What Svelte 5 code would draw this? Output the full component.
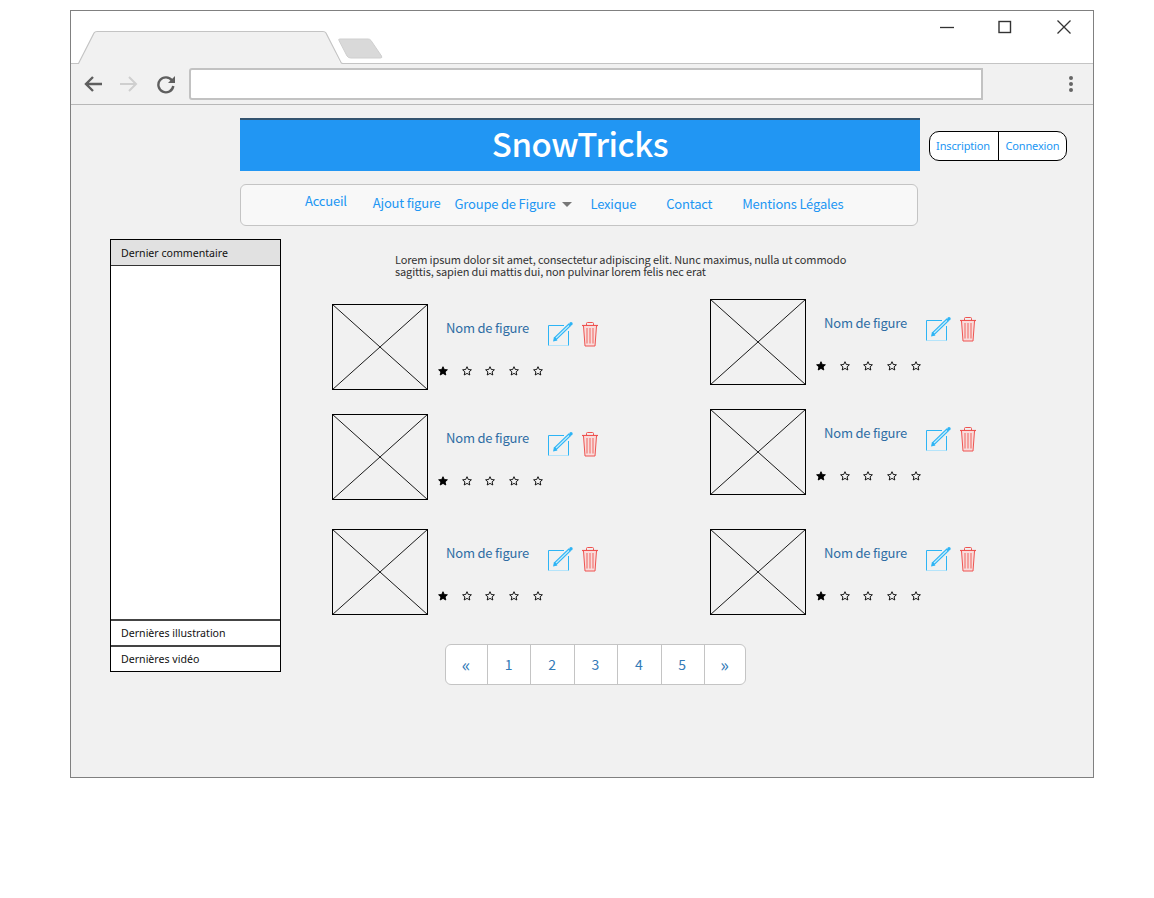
<script lang="ts">
  const navItems = [
    { label: 'Accueil', cls: 'accueil' },
    { label: 'Ajout figure', cls: 'ajout' },
    { label: 'Groupe de Figure', cls: 'groupe', caret: true },
    { label: 'Lexique', cls: 'lexique' },
    { label: 'Contact', cls: 'contact' },
    { label: 'Mentions Légales', cls: 'mentions' }
  ];
  const pages = ['«', '1', '2', '3', '4', '5', '»'];
  const columns = ['left', 'right'];
  const stars = [true, false, false, false, false];
</script>

<div class="window">
  <div class="tabbar">
    <svg class="tab" width="320" height="53" viewBox="0 0 320 53" aria-hidden="true">
      <path d="M0 52.500H8L23 21.500Q24 20.500 26 20.500H252Q254 20.500 255 22L269 52H320V53H0Z" fill="#f1f1f1" />
      <path d="M0 52.500H7.500L23 22Q24 20.500 26 20.500H252Q254 20.500 255 22L270 51.500Q270.500 52.500 272 52.500H320" fill="none" stroke="#c4c4c4" stroke-width="1.200" />
      <path d="M268 29.500Q267 28 269 28H297Q299 28 300 29.500L310.500 45Q311.500 47 309.500 47H280Q277 47 276 45Z" fill="#d9d9d9" stroke="#cfcfcf" />
    </svg>
    <div class="tabfill">
      <svg class="winbtn" width="14" height="14" viewBox="0 0 14 14" aria-hidden="true"><path d="M0 7.500H14" stroke="#333" stroke-width="1.300" /></svg>
      <svg class="winbtn" width="14" height="14" viewBox="0 0 14 14" aria-hidden="true"><rect x="1" y="1.500" width="11.500" height="11" fill="none" stroke="#333" stroke-width="1.400" /></svg>
      <svg class="winbtn close" width="16" height="16" viewBox="0 0 16 16" aria-hidden="true"><path d="M1.500 1.500L14.500 14.500M14.500 1.500L1.500 14.500" stroke="#333" stroke-width="1.300" /></svg>
    </div>
  </div>

  <div class="toolbar">
    <svg class="back" width="20" height="18" viewBox="0 0 20 18" aria-hidden="true"><path d="M19 9H3M10 2L3 9L10 16" fill="none" stroke="#5f5f5f" stroke-width="2.400" /></svg>
    <svg class="fwd" width="20" height="18" viewBox="0 0 20 18" aria-hidden="true"><path d="M1 9H17M10 2L17 9L10 16" fill="none" stroke="#cfcfcf" stroke-width="2" /></svg>
    <svg class="reload" width="20" height="20" viewBox="0 0 20 20" aria-hidden="true">
      <path d="M16 6.500A7.500 7.500 0 1 0 17.300 12" fill="none" stroke="#5f5f5f" stroke-width="2.400" />
      <path d="M19 2V9H12Z" fill="#5f5f5f" />
    </svg>
    <div class="address"></div>
    <div class="dots"><i></i><i></i><i></i></div>
  </div>

  <div class="content">
    <div class="topline">
      <h1>SnowTricks</h1>
      <div class="auth">
        <a href="#top">Inscription</a>
        <a href="#top">Connexion</a>
      </div>
    </div>

    <nav>
      {#each navItems as item}
        <a class={item.cls} href="#top">{item.label}{#if item.caret}<span class="caret"></span>{/if}</a>
      {/each}
    </nav>

    <div class="body">
      <aside>
        <div class="side-head">Dernier commentaire</div>
        <div class="side-main"></div>
        <div class="side-row">Dernières illustration</div>
        <div class="side-row">Dernières vidéo</div>
      </aside>

      <main>
        <p class="intro">Lorem ipsum dolor sit amet, consectetur adipiscing elit. Nunc maximus, nulla ut commodo sagittis, sapien dui mattis dui, non pulvinar lorem felis nec erat</p>

        <div class="cards">
          {#each columns as col}
            <div class="col {col}">
              {#each [0, 1, 2] as _}
                <div class="card">
                  <svg class="thumb" width="96" height="86" viewBox="0 0 96 86" aria-hidden="true">
                    <rect x=".5" y=".5" width="95" height="85" fill="none" stroke="#000" />
                    <path d="M0 0L96 86M96 0L0 86" stroke="#000" stroke-width=".9" />
                  </svg>
                  <div class="info">
                    <div class="title-row">
                      <span class="name">Nom de figure</span>
                      <svg class="edit" width="25" height="25" viewBox="0 0 25 25" aria-hidden="true">
                        <path d="M16 3.500H.500V23.500H20.500V9" fill="none" stroke="#2db4f5" />
                        <path d="M.500 23.500H20.500" stroke="#b5e4fa" />
                        <path d="M7 17L22 2.500" stroke="#2db4f5" stroke-width="3.600" />
                        <path d="M8 16L21 3.500" stroke="#c4ecfc" stroke-width="1.200" />
                        <path d="M5 19.500L6 15L9.500 18.500Z" fill="#2db4f5" />
                        <circle cx="23" cy="1.800" r="1.700" fill="#2db4f5" />
                      </svg>
                      <svg class="trash" width="18" height="25" viewBox="0 0 18 25" aria-hidden="true">
                        <path d="M0 3.500H16" stroke="#ef5350" stroke-width="1.200" />
                        <path d="M4.500 3V1.500Q4.500 .5 5.500 .5H10.500Q11.500 .5 11.500 1.500V3" fill="none" stroke="#ef5350" />
                        <path d="M1.500 4L3 24H13L14.500 4" fill="#f9dcdb" stroke="#ef5350" />
                        <path d="M5 6V21.500M8 6V21.500M11 6V21.500" stroke="#f28b88" stroke-width="1.500" />
                      </svg>
                    </div>
                    <div class="stars">
                      {#each stars as on}
                        <svg width="10" height="10" viewBox="0 0 10 10" aria-hidden="true">
                          <path d="M5 .7L6.300 3.500L9.400 3.800L7.100 5.900L7.800 9L5 7.400L2.200 9L2.900 5.900L.6 3.800L3.700 3.500Z" fill={on ? '#000' : 'none'} stroke="#000" stroke-width=".9" />
                        </svg>
                      {/each}
                    </div>
                  </div>
                </div>
              {/each}
            </div>
          {/each}
        </div>

        <div class="pager">
          {#each pages as p, i}
            <a class:arrow={i === 0 || i === pages.length - 1} href="#top">{p}</a>
          {/each}
        </div>
      </main>
    </div>
  </div>
</div>

<style>
  :global(body) { background: #fff; }
  .window { box-sizing: border-box; width: 1024px; height: 768px; margin: 10px 0 0 70px;
    border: 1px solid #808080; background: #fff;
    display: flex; flex-direction: column; font-family: "Noto Sans CJK SC", "Noto Sans", sans-serif; }

  .tabbar { display: flex; height: 53px; flex: none; }
  .tab { flex: none; display: block; }
  .tabfill { flex: 1; height: 53px; box-sizing: border-box; border-bottom: 1px solid #c4c4c4; display: flex; justify-content: flex-end;
    align-items: flex-start; gap: 44px; padding: 9px 21px 0 0; }
  .winbtn { flex: none; }
  .close { margin-top: -1px; }

  .toolbar { height: 41px; flex: none; box-sizing: border-box; background: #f1f1f1; border-bottom: 1px solid #b8b8b8;
    display: flex; align-items: center; padding: 0 20px 0 12px; }
  .fwd { margin-left: 16px; }
  .reload { margin-left: 17px; }
  .address { width: 794px; height: 32px; box-sizing: border-box; margin-left: 13px; background: #fff;
    border: 2px solid #c2c2c2; border-radius: 3px 0 0 3px; }
  .dots { margin-left: auto; display: flex; flex-direction: column; gap: 2px; }
  .dots i { display: block; width: 4px; height: 4px; border-radius: 50%; background: #666; }

  .content { flex: 1; background: #f1f1f1; padding: 13px 0 0 169px; min-height: 0; }

  .topline { display: flex; align-items: flex-start; gap: 9px; }
  h1 { margin: 0; width: 680px; height: 53px; box-sizing: border-box; background: #2196f3; border-top: 2px solid #33536f;
    color: #fff; font-size: 33px; letter-spacing: -.4px; font-weight: 500; line-height: 46px; text-align: center; }
  .auth { display: flex; height: 30px; box-sizing: border-box; margin-top: 13px; border: 1px solid #000; border-radius: 10px;
    background: #fff; overflow: hidden; font-family: "Noto Sans", sans-serif; font-size: 11px; letter-spacing: -.15px; }
  .auth a { width: 67px; text-align: center; color: #2196f3; text-decoration: none; line-height: 28px; }
  .auth a:first-child { width: 66px; padding-right: 2px; }
  .auth a + a { border-left: 1px solid #000; }

  nav { width: 678px; height: 42px; box-sizing: border-box; margin-top: 13px; padding: 0 0 4px 64px; background: #f8f8f8;
    border: 1px solid #c4c4c4; border-radius: 6px; display: flex; align-items: center; font-size: 13px; letter-spacing: -.2px; }
  nav a { color: #2196f3; text-decoration: none; white-space: nowrap; }
  nav .accueil { margin-bottom: 6px; }
  nav .ajout { margin-left: 26px; margin-bottom: 1px; }
  nav .groupe { margin-left: 14px; }
  nav .lexique { margin-left: 18px; }
  nav .contact { margin-left: 30px; }
  nav .mentions { margin-left: 30px; }
  .caret { display: inline-block; margin-left: 7px; vertical-align: 2px; border: 5px solid transparent;
    border-top-color: #777; border-bottom: 0; }

  .body { display: flex; margin: 13px 0 0 -130px; }
  aside { width: 171px; height: 433px; box-sizing: border-box; flex: none; border: 1px solid #000; background: #fff;
    display: flex; flex-direction: column; font-family: "Noto Sans", sans-serif; font-size: 10.600px; color: #111; }
  .side-head { height: 26px; box-sizing: border-box; flex: none; background: #e1e1e1; border-bottom: 1px solid #333;
    line-height: 26px; padding-left: 10px; }
  .side-main { flex: 1; }
  .side-row { height: 26px; box-sizing: border-box; flex: none; border-top: 2px solid #444; line-height: 24px; padding-left: 10px; }

  main { margin-left: 51px; flex: 1; }
  .intro { width: 470px; margin: 14px 0 0 63px; font-size: 11px; letter-spacing: -.13px; line-height: 12px; color: #333; }

  .cards { display: flex; margin-top: 27px; }
  .col { width: 378px; flex: none; display: flex; flex-direction: column; }
  .col.right { margin-top: -5px; }
  .card { display: flex; height: 86px; margin-bottom: 24px; }
  .col.left .card:nth-child(2) { margin-bottom: 29px; }
  .col.right .card:nth-child(2) { margin-bottom: 34px; }
  .col .card:last-child { margin-bottom: 0; }
  .thumb { flex: none; display: block; }
  .info { margin-left: 11px; }
  .title-row { display: flex; align-items: flex-start; height: 53px; padding: 18px 0 0 7px; box-sizing: border-box; }
  .name { font-size: 13px; letter-spacing: -.2px; line-height: 15px; color: #2e6da4; width: 102px; flex: none; margin-top: -2px; }
  .edit { flex: none; }
  .trash { flex: none; margin-left: 9px; }
  .stars { display: flex; gap: 13.700px; margin: 9px 0 0 -1px; }
  .stars svg { flex: none; display: block; }

  .pager { display: grid; grid-template-columns: 41px repeat(5, 43.400px) 1fr; width: 301px; height: 41px; box-sizing: border-box;
    margin: 29px 0 0 113px; background: #fff; border: 1px solid #c4c4c4; border-radius: 6px; font-size: 14px; }
  .pager a { text-align: center; line-height: 38px; color: #337ab7; text-decoration: none; padding-right: 1px; }
  .pager a + a { border-left: 1px solid #c4c4c4; }
  .pager a.arrow { font-size: 18px; line-height: 39px; }
</style>
